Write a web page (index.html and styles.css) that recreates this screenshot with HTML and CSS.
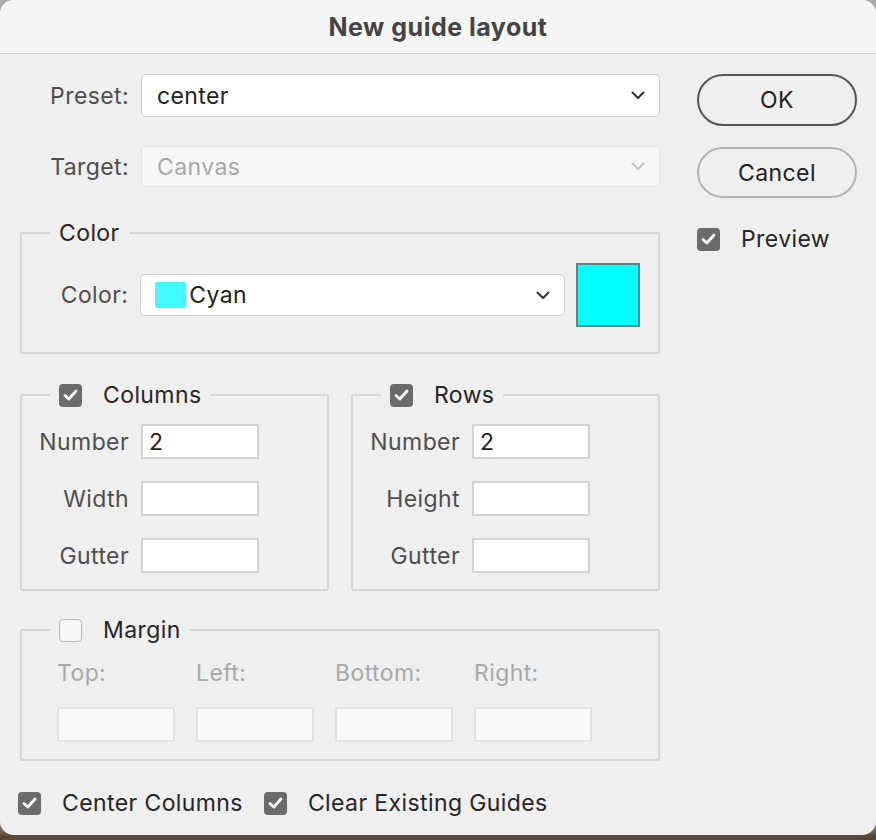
FILE: index.html
```html
<!DOCTYPE html>
<html lang="en">
<head>
<meta charset="utf-8">
<title>New guide layout</title>
<link rel="stylesheet" href="styles.css">
</head>
<body>
<div class="window">
  <div class="titlebar">New guide layout</div>
  <div class="content">
    <div class="main">
      <div class="field-row preset-row">
        <span class="label">Preset:</span>
        <div class="select">
          <span class="value">center</span>
          <svg class="chev" width="14" height="9" viewBox="0 0 14 9"><polyline points="1.5,1.5 7,7 12.5,1.5" fill="none" stroke="#333" stroke-width="2" stroke-linecap="round" stroke-linejoin="round"/></svg>
        </div>
      </div>
      <div class="field-row target-row">
        <span class="label">Target:</span>
        <div class="select disabled">
          <span class="value">Canvas</span>
          <svg class="chev" width="14" height="9" viewBox="0 0 14 9"><polyline points="1.5,1.5 7,7 12.5,1.5" fill="none" stroke="#c4c4c4" stroke-width="2" stroke-linecap="round" stroke-linejoin="round"/></svg>
        </div>
      </div>

      <fieldset class="group color-group">
        <legend><span class="legend-text">Color</span></legend>
        <div class="color-row">
          <span class="label">Color:</span>
          <div class="select color-select">
            <span class="mini-swatch"></span>
            <span class="value">Cyan</span>
            <svg class="chev" width="14" height="9" viewBox="0 0 14 9"><polyline points="1.5,1.5 7,7 12.5,1.5" fill="none" stroke="#333" stroke-width="2" stroke-linecap="round" stroke-linejoin="round"/></svg>
          </div>
          <div class="big-swatch"></div>
        </div>
      </fieldset>

      <div class="pair">
        <fieldset class="group grid-group">
          <legend>
            <span class="check on"><svg width="15" height="12" viewBox="0 0 15 12"><polyline points="2,6.5 5.8,10 13,2" fill="none" stroke="#fff" stroke-width="2.8" stroke-linecap="round" stroke-linejoin="round"/></svg></span>
            <span class="legend-text">Columns</span>
          </legend>
          <div class="input-row"><span class="label">Number</span><div class="input">2</div></div>
          <div class="input-row"><span class="label">Width</span><div class="input"></div></div>
          <div class="input-row"><span class="label">Gutter</span><div class="input"></div></div>
        </fieldset>
        <fieldset class="group grid-group">
          <legend>
            <span class="check on"><svg width="15" height="12" viewBox="0 0 15 12"><polyline points="2,6.5 5.8,10 13,2" fill="none" stroke="#fff" stroke-width="2.8" stroke-linecap="round" stroke-linejoin="round"/></svg></span>
            <span class="legend-text">Rows</span>
          </legend>
          <div class="input-row"><span class="label">Number</span><div class="input">2</div></div>
          <div class="input-row"><span class="label">Height</span><div class="input"></div></div>
          <div class="input-row"><span class="label">Gutter</span><div class="input"></div></div>
        </fieldset>
      </div>

      <fieldset class="group margin-group">
        <legend>
          <span class="check off"></span>
          <span class="legend-text">Margin</span>
        </legend>
        <div class="margin-grid">
          <div class="margin-cell"><span class="dlabel">Top:</span><div class="input disabled"></div></div>
          <div class="margin-cell"><span class="dlabel">Left:</span><div class="input disabled"></div></div>
          <div class="margin-cell"><span class="dlabel">Bottom:</span><div class="input disabled"></div></div>
          <div class="margin-cell"><span class="dlabel">Right:</span><div class="input disabled"></div></div>
        </div>
      </fieldset>

      <div class="bottom-row">
        <label class="opt">
          <span class="check on"><svg width="15" height="12" viewBox="0 0 15 12"><polyline points="2,6.5 5.8,10 13,2" fill="none" stroke="#fff" stroke-width="2.8" stroke-linecap="round" stroke-linejoin="round"/></svg></span>
          <span class="opt-text">Center Columns</span>
        </label>
        <label class="opt">
          <span class="check on"><svg width="15" height="12" viewBox="0 0 15 12"><polyline points="2,6.5 5.8,10 13,2" fill="none" stroke="#fff" stroke-width="2.8" stroke-linecap="round" stroke-linejoin="round"/></svg></span>
          <span class="opt-text">Clear Existing Guides</span>
        </label>
      </div>
    </div>

    <div class="side">
      <div class="btn primary">OK</div>
      <div class="btn secondary">Cancel</div>
      <label class="opt preview">
        <span class="check on"><svg width="15" height="12" viewBox="0 0 15 12"><polyline points="2,6.5 5.8,10 13,2" fill="none" stroke="#fff" stroke-width="2.8" stroke-linecap="round" stroke-linejoin="round"/></svg></span>
        <span class="opt-text">Preview</span>
      </label>
    </div>
  </div>
</div>
</body>
</html>
```

FILE: styles.css
```css
* { box-sizing: border-box; }

html, body {
  margin: 0;
  padding: 0;
}

body {
  width: 876px;
  height: 840px;
  background: linear-gradient(to bottom, #a9a9a9 0, #a9a9a9 820px, #5a4636 836px, #5a4636 840px);
  font-family: Inter, "Noto Sans", "Liberation Sans", sans-serif;
  color: #222;
  overflow: hidden;
  letter-spacing: 0.4px;
}

.window {
  width: 876px;
  height: 835px;
  background: #efefef;
  border-radius: 14px;
  overflow: hidden;
}

.titlebar {
  height: 54px;
  background: #f5f5f5;
  border-bottom: 1px solid #d2d2d2;
  display: flex;
  align-items: center;
  justify-content: center;
  font-weight: 700;
  font-size: 25px;
  letter-spacing: 0.5px;
  color: #444;
  padding-top: 0;
}

.content {
  display: flex;
  padding: 20px 0 0 20px;
  gap: 37px;
}

.main {
  width: 640px;
  display: flex;
  flex-direction: column;
}

.label {
  font-size: 23px;
  color: #4e4e4e;
  text-align: right;
  white-space: nowrap;
}

.field-row {
  display: flex;
  align-items: center;
  gap: 12px;
}

.field-row .label {
  width: 109px;
}

.select {
  flex: 1;
  height: 43px;
  background: #fff;
  border: 1.5px solid #d0d0d0;
  border-radius: 5px;
  display: flex;
  align-items: center;
  padding: 0 14px 0 15px;
  font-size: 23px;
  color: #222;
}

.select .value {
  flex: 1;
}

.select.disabled {
  background: #f7f7f7;
  border-color: #e2e2e2;
  color: #a8a8a8;
  height: 41px;
}

.target-row {
  margin-top: 29px;
}

.group {
  margin: 0;
  border: 2px solid #d6d6d6;
  border-radius: 2px;
  padding: 0;
  min-width: 0;
}

.group legend {
  margin-left: 28px;
  padding: 0 9px;
  height: 28px;
  display: flex;
  align-items: center;
  gap: 21px;
}

.legend-text {
  font-size: 23px;
  color: #262626;
}

.color-group {
  margin-top: 32px;
  padding: 16px 18px 25px 0;
}

.color-row {
  display: flex;
  align-items: center;
}

.color-row .label {
  width: 107px;
  margin-right: 12px;
}

.color-select {
  flex: none;
  width: 425px;
  height: 42px;
  padding-left: 14px;
}

.mini-swatch {
  width: 31px;
  height: 26px;
  background: #40fbfb;
  border-radius: 2px;
  margin-right: 3px;
}

.big-swatch {
  width: 64px;
  height: 64px;
  margin-left: 11px;
  background: #00ffff;
  border: 2px solid #5c8585;
}

.pair {
  display: flex;
  gap: 22px;
  margin-top: 27px;
}

.grid-group {
  flex: 1;
  padding: 15px 0 16px 0;
  display: flex;
  flex-direction: column;
  gap: 22px;
}

.input-row {
  display: flex;
  align-items: center;
  gap: 12px;
}

.input-row .label {
  width: 107px;
}

.input {
  width: 118px;
  height: 35px;
  background: #fff;
  border: 2px solid #d4d4d4;
  font-size: 23px;
  color: #222;
  display: flex;
  align-items: center;
  padding-left: 6px;
}

.input.disabled {
  background: #fafafa;
  border-color: #e2e2e2;
}

.margin-group {
  margin-top: 25px;
  padding: 16px 0 17px 0;
}

.margin-grid {
  display: flex;
  gap: 21px;
  padding-left: 35px;
}

.margin-cell {
  display: flex;
  flex-direction: column;
  gap: 21px;
}

.dlabel {
  font-size: 23px;
  color: #a9a9a9;
  line-height: 26px;
}

.check {
  width: 23px;
  height: 23px;
  border-radius: 4px;
  display: inline-flex;
  align-items: center;
  justify-content: center;
  flex: none;
}

.check.on {
  background: #6b6b6b;
}

.check.off {
  background: #f6f6f6;
  border: 1.5px solid #b9b9b9;
}

.opt {
  display: flex;
  align-items: center;
  gap: 21px;
}

.opt-text {
  font-size: 23px;
  color: #262626;
}

.bottom-row {
  display: flex;
  gap: 21px;
  margin-top: 28px;
  margin-left: -2px;
}

.side {
  width: 160px;
  display: flex;
  flex-direction: column;
}

.btn {
  height: 52px;
  border-radius: 26px;
  display: flex;
  align-items: center;
  justify-content: center;
  font-size: 23px;
  color: #222;
}

.btn.primary {
  border: 2px solid #555;
}

.btn.secondary {
  margin-top: 21px;
  height: 51px;
  border: 2px solid #b4b4b4;
}

.preview {
  margin-top: 27px;
}
```
